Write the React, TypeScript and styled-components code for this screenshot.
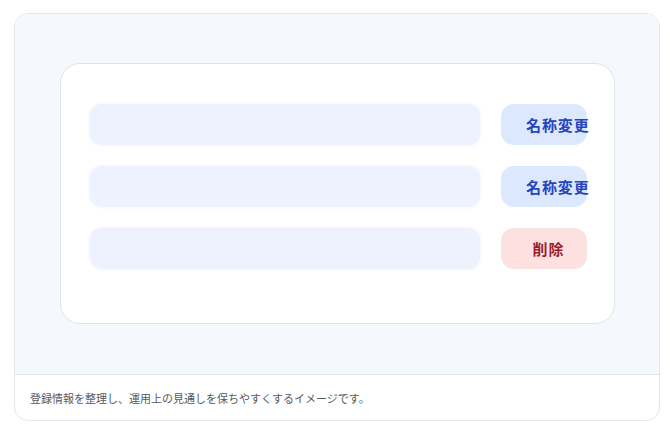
import React from "react";
import styled, { createGlobalStyle } from "styled-components";

const Global = createGlobalStyle`
  html, body { margin: 0; padding: 0; background: #ffffff; }
  body { font-family: "Noto Sans CJK JP", "Noto Sans", sans-serif; }
`;

const Page = styled.div`
  padding: 13px 0 0 14px;
`;

const Card = styled.div`
  width: 646px;
  height: 408px;
  box-sizing: border-box;
  border: 1px solid #e2e6ed;
  border-radius: 14px;
  overflow: hidden;
  display: flex;
  flex-direction: column;
  background: #ffffff;
`;

const Stage = styled.div`
  flex: 1;
  background: linear-gradient(180deg, #f5f9fe 0%, #f5f9fd 100%);
  padding: 49px 44px 50px 45px;
  border-bottom: 1px solid #e1e5ec;
  display: flex;
`;

const Panel = styled.div`
  flex: 1;
  background: #ffffff;
  border: 1px solid #dde3eb;
  border-radius: 20px;
  padding: 40px 26px 54px 29px;
  display: flex;
  flex-direction: column;
  gap: 21px;
`;

const Row = styled.div`
  display: grid;
  grid-template-columns: 390px 86px;
  column-gap: 21px;
  height: 41px;
`;

const Field = styled.div`
  background: #eef2fe;
  border-radius: 12px;
  box-shadow: 0 0 3px 1px #f3f6fe;
`;

const Action = styled.button<{ $tone: "blue" | "red" }>`
  all: unset;
  box-sizing: border-box;
  width: 86px;
  height: 41px;
  border-radius: 13px;
  padding: 0 16px 0 25px;
  text-align: center;
  white-space: nowrap;
  font-family: "Noto Sans CJK JP", sans-serif;
  font-size: 15px;
  font-weight: 700;
  letter-spacing: 0.06em;
  line-height: 41px;
  background: ${(p) => (p.$tone === "blue" ? "#dbe8fd" : "#fde1e1")};
  color: ${(p) => (p.$tone === "blue" ? "#2645bd" : "#9b1c2a")};
`;

const Footer = styled.div`
  height: 46px;
  display: flex;
  align-items: center;
  padding-left: 15px;
  font-size: 11px;
  color: #555a61;
  font-family: "Noto Sans CJK JP", sans-serif;
`;

const rows: { label: string; tone: "blue" | "red" }[] = [
  { label: "名称変更", tone: "blue" },
  { label: "名称変更", tone: "blue" },
  { label: "削除", tone: "red" },
];

export default function App() {
  return (
    <>
      <Global />
      <Page>
        <Card>
          <Stage>
            <Panel>
              {rows.map((r, i) => (
                <Row key={i}>
                  <Field />
                  <Action $tone={r.tone}>{r.label}</Action>
                </Row>
              ))}
            </Panel>
          </Stage>
          <Footer>登録情報を整理し、運用上の見通しを保ちやすくするイメージです。</Footer>
        </Card>
      </Page>
    </>
  );
}
